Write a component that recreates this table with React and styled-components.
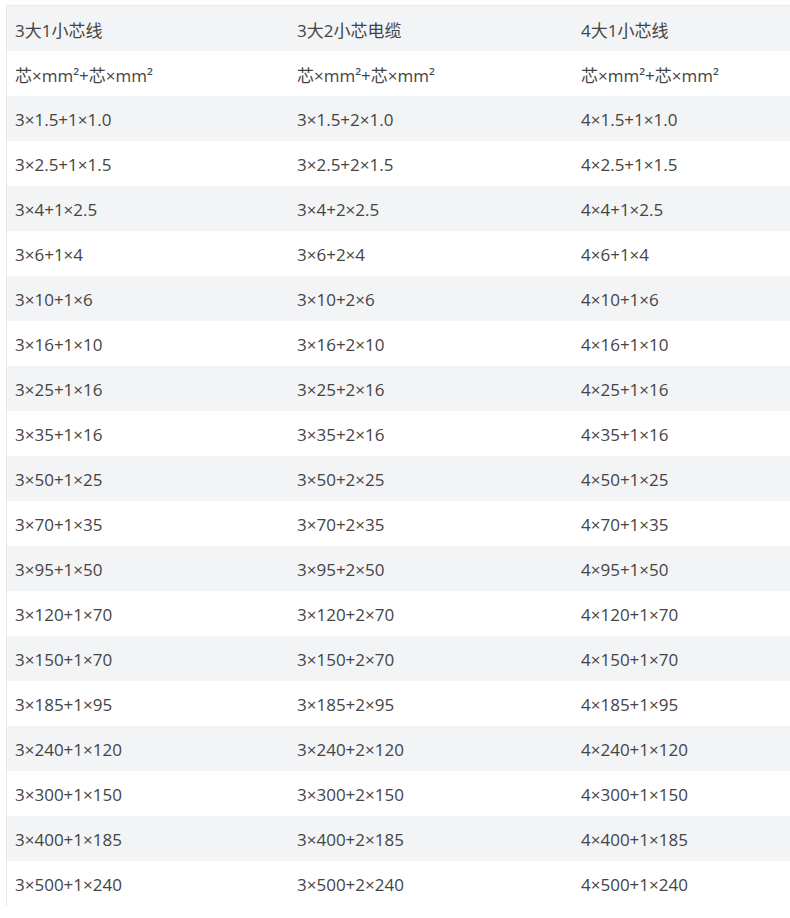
import styled, { createGlobalStyle } from 'styled-components';

const GlobalStyle = createGlobalStyle`
    body {
        margin: 0;
        background: #fff;
        overflow: hidden;
    }
`;

const Page = styled.div`
    padding: 5px 0 0 6px;
`;

const Table = styled.div`
    display: grid;
    grid-template-columns: 282px 284px 218px;
    border-top: 1px solid #e6e8eb;
    border-left: 1px solid #e6e8eb;
    font-family: "Open Sans", "Noto Sans CJK SC", sans-serif;
    font-size: 17px;
    color: #444;
`;

const Row = styled.div`
    display: contents;
`;

const Cell = styled.div`
    height: 45px;
    display: flex;
    align-items: center;
    padding: 1px 0 0 8px;
    box-sizing: border-box;
    background: ${(p) => (p.$striped ? '#f3f4f6' : '#fff')};
`;

const header = ['3大1小芯线', '3大2小芯电缆', '4大1小芯线'];

const sizes = [
    ['1.5', '1.0'],
    ['2.5', '1.5'],
    ['4', '2.5'],
    ['6', '4'],
    ['10', '6'],
    ['16', '10'],
    ['25', '16'],
    ['35', '16'],
    ['50', '25'],
    ['70', '35'],
    ['95', '50'],
    ['120', '70'],
    ['150', '70'],
    ['185', '95'],
    ['240', '120'],
    ['300', '150'],
    ['400', '185'],
    ['500', '240'],
];

const rows = [
    header,
    ['芯×mm²+芯×mm²', '芯×mm²+芯×mm²', '芯×mm²+芯×mm²'],
    ...sizes.map(([a, b]) => [`3×${a}+1×${b}`, `3×${a}+2×${b}`, `4×${a}+1×${b}`]),
];

export default function App() {
    return (
        <Page>
            <GlobalStyle />
            <Table>
                {rows.map((row, i) => (
                    <Row key={i}>
                        {row.map((text, j) => (
                            <Cell key={j} $striped={i % 2 === 0}>
                                {text}
                            </Cell>
                        ))}
                    </Row>
                ))}
            </Table>
        </Page>
    );
}
